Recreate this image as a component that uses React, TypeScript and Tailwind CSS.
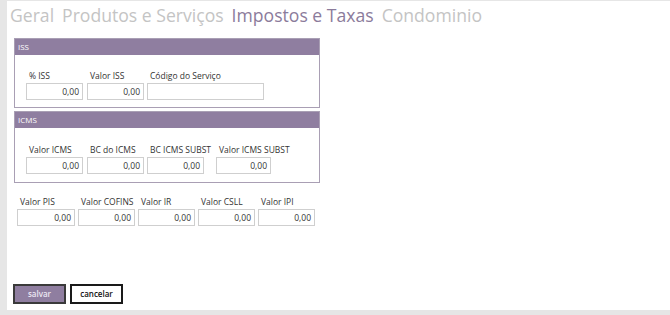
import React from "react";

const font = { fontFamily: '"Open Sans", "Noto Sans", sans-serif' };

type FieldProps = { label: string; value?: string; w?: string; className?: string };

// label sits above the input, input width fixes the column width
const Field = ({ label, value = "0,00", w = "w-[57px]", className = "" }: FieldProps) => (
  <div className={`flex flex-col ${w} ${className}`}>
    <div className="pl-[3px] mb-[2px] text-[8.5px] leading-[11px] text-[#333] whitespace-nowrap">{label}</div>
    <div className="w-full h-[17px] border border-[#cfcfcf] bg-white text-right pr-[3px] text-[8.5px] leading-[15px] text-[#333]">
      {value}
    </div>
  </div>
);

const Box = ({ title, children, pad }: { title: string; children: React.ReactNode; pad: string }) => (
  <div className="ml-[7px] w-[306px] border border-[#a99fb4]">
    <div className="h-[16px] bg-[#8f7ea0] pl-[3px] text-[8px] leading-[16px] text-white">{title}</div>
    <div className={`flex pl-[11px] ${pad}`}>{children}</div>
  </div>
);

const App = () => {
  const tabs = [
    { name: "Geral", active: false },
    { name: "Produtos e Serviços", active: false },
    { name: "Impostos e Taxas", active: true },
    { name: "Condominio", active: false },
  ];

  return (
    <div className="w-[670px] h-[315px] bg-[#e6e6e6] pt-[1px] pl-[7px] pb-[5px] flex" style={font}>
      <div className="flex-1 bg-white flex flex-col">
        {/* tabs */}
        <div className="flex gap-[8px] pl-[3px] mt-[2px] text-[17.6px] leading-[24px]">
          {tabs.map((t) => (
            <span key={t.name} className={t.active ? "text-[#8b7b9b]" : "text-[#c4c4c4]"}>
              {t.name}
            </span>
          ))}
        </div>

        <div className="mt-[11px]">
          <Box title="ISS" pad="pt-[15px] pb-[7px]">
            <Field label="% ISS" />
            <Field label="Valor ISS" className="ml-[4px]" />
            <Field label="Código do Serviço" value="" w="w-[117px]" className="ml-[3px]" />
          </Box>
        </div>

        <div className="mt-[3px]">
          <Box title="ICMS" pad="pt-[16px] pb-[8px]">
            <Field label="Valor ICMS" />
            <Field label="BC do ICMS" className="ml-[4px]" />
            <Field label="BC ICMS SUBST" className="ml-[3px]" />
            <Field label="Valor ICMS SUBST" w="w-[55px]" className="ml-[12px]" />
          </Box>
        </div>

        <div className="flex gap-[3px] pl-[10px] mt-[13px]">
          <Field label="Valor PIS" w="w-[58px]" />
          <Field label="Valor COFINS" />
          <Field label="Valor IR" />
          <Field label="Valor CSLL" />
          <Field label="Valor IPI" />
        </div>

        <div className="mt-auto mb-[6px] ml-[6px] flex gap-[4px]">
          <button className="w-[53px] h-[20px] bg-[#8f7ea0] border-2 border-[#3a3a3a] text-[8px] font-semibold text-[#ece6f2]">
            salvar
          </button>
          <button className="w-[53px] h-[20px] bg-white border-2 border-[#1a1a1a] text-[8px] font-semibold text-[#111]">
            cancelar
          </button>
        </div>
      </div>
    </div>
  );
};

export default App;
